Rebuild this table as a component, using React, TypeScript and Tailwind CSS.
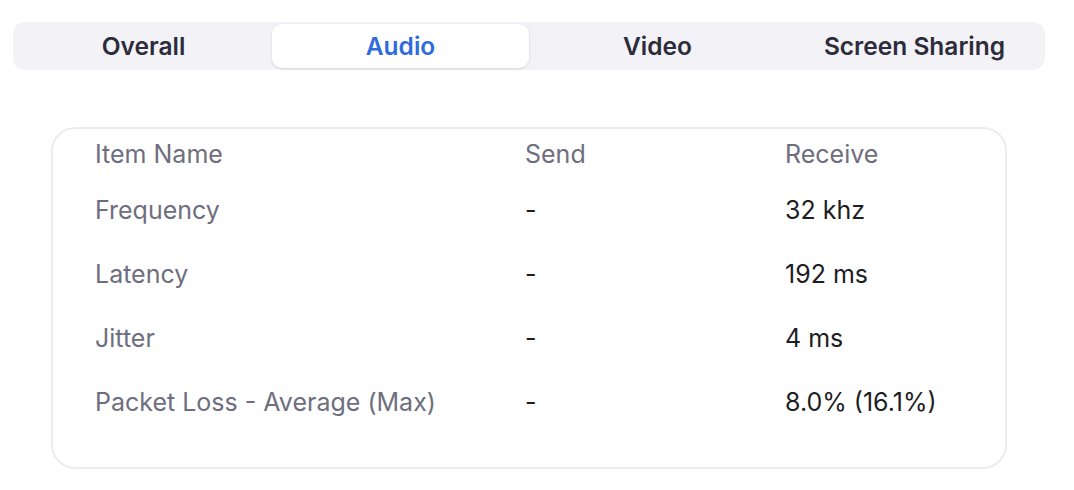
const tabs = ["Overall", "Audio", "Video", "Screen Sharing"]

const rows = [
  { name: "Frequency", send: "-", receive: "32 khz" },
  { name: "Latency", send: "-", receive: "192 ms" },
  { name: "Jitter", send: "-", receive: "4 ms" },
  { name: "Packet Loss - Average (Max)", send: "-", receive: "8.0% (16.1%)" },
]

export default function App() {
  return (
    <div className="w-[1074px] h-[490px] bg-white font-['Inter',sans-serif] antialiased">
      {/* Tabs */}
      <div className="pt-[22px] pl-[13px]">
        <div className="grid grid-cols-4 w-[1032px] h-[48px] bg-[#f2f2f7] rounded-[12px] p-[2px]">
          {tabs.map((t) => (
            <div
              key={t}
              className={
                t === "Audio"
                  ? "flex items-center justify-center rounded-[10px] bg-white shadow-[0_1px_3px_rgba(0,0,0,0.12)] text-[24.5px] font-semibold text-[#2f6bdb] pt-[1px]"
                  : "flex items-center justify-center text-[24.5px] font-semibold text-[#2c2c3a] pt-[1px]"
              }
            >
              {t}
            </div>
          ))}
        </div>
      </div>

      {/* Card */}
      <div className="mt-[57px] ml-[51px] w-[956px] h-[342px] border-2 border-[#ececf0] rounded-[24px] pl-[42px] pt-[2px]">
        <div className="grid grid-cols-[430px_260px_1fr] h-[48px] items-center text-[25px] text-[#6e6e7e]">
          <div>Item Name</div>
          <div>Send</div>
          <div>Receive</div>
        </div>
        {rows.map((r) => (
          <div key={r.name} className="grid grid-cols-[430px_260px_1fr] h-[64px] items-center text-[25px]">
            <div className="text-[#6e6e7e]">{r.name}</div>
            <div className="text-[#1d1d24]">{r.send}</div>
            <div className="text-[#1d1d24]">{r.receive}</div>
          </div>
        ))}
      </div>
    </div>
  )
}
